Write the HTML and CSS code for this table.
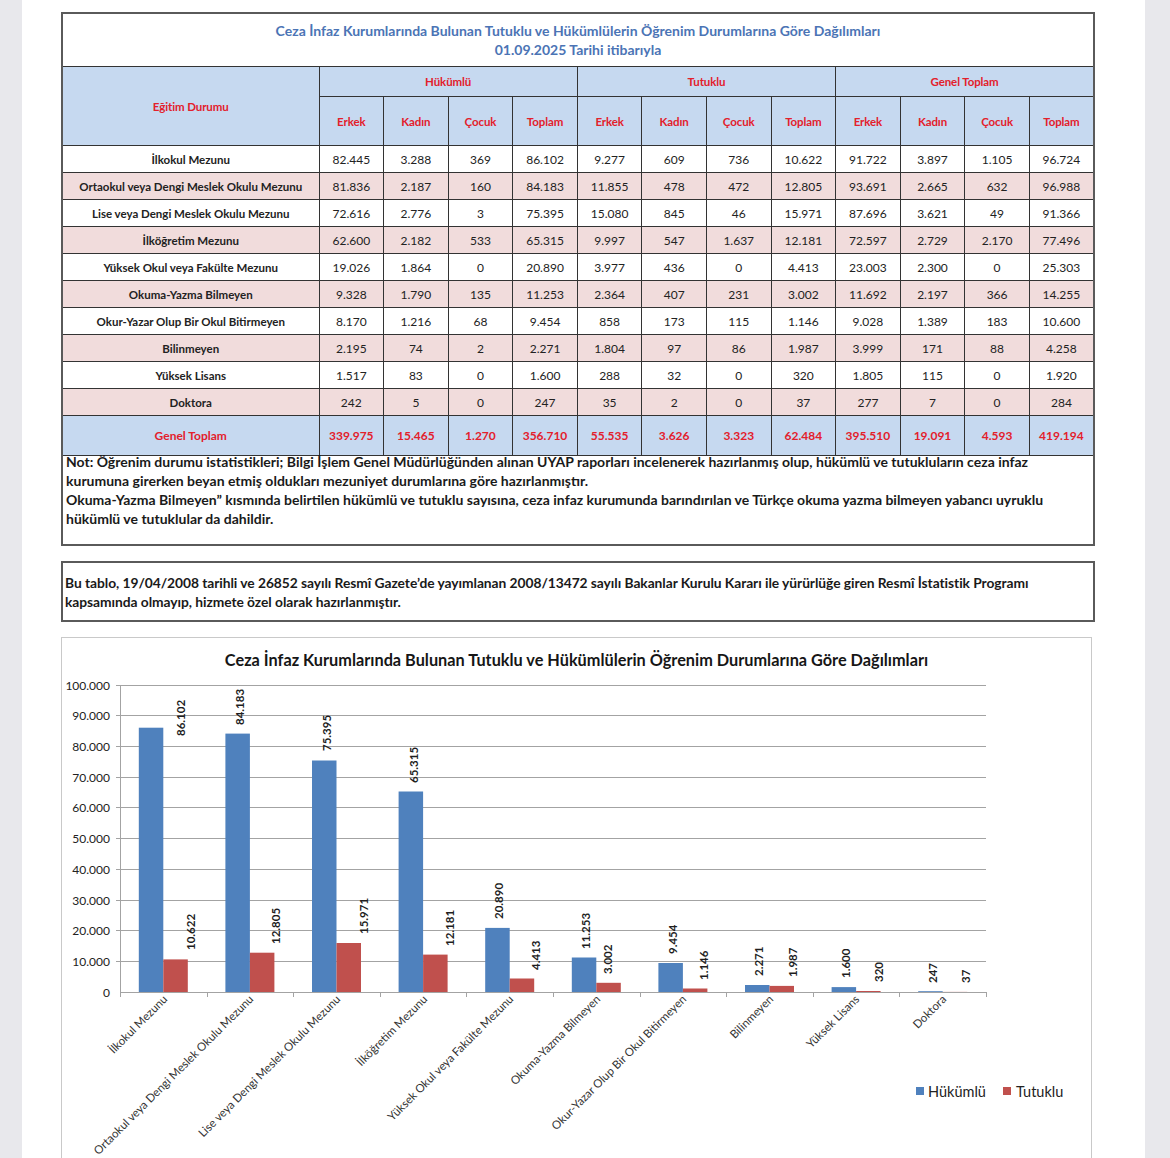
FILE: index.html
```html
<!DOCTYPE html>
<html lang="tr">
<head>
<meta charset="utf-8">
<title>Öğrenim Durumlarına Göre Dağılımları</title>
<link rel="stylesheet" href="styles.css">
</head>
<body>
<div class="page">
  <table class="stats">
    <colgroup>
      <col class="c-label">
      <col><col><col><col><col><col><col><col><col><col><col><col>
    </colgroup>
    <tr class="title-row">
      <td colspan="13">Ceza İnfaz Kurumlarında Bulunan Tutuklu ve Hükümlülerin Öğrenim Durumlarına Göre Dağılımları<br>01.09.2025 Tarihi itibarıyla</td>
    </tr>
    <tr class="head1">
      <th rowspan="2">Eğitim Durumu</th>
      <th colspan="4">Hükümlü</th>
      <th colspan="4">Tutuklu</th>
      <th colspan="4">Genel Toplam</th>
    </tr>
    <tr class="head2">
      <th>Erkek</th><th>Kadın</th><th>Çocuk</th><th>Toplam</th>
      <th>Erkek</th><th>Kadın</th><th>Çocuk</th><th>Toplam</th>
      <th>Erkek</th><th>Kadın</th><th>Çocuk</th><th>Toplam</th>
    </tr>
    <tr class="row">
      <th>İlkokul Mezunu</th><td>82.445</td><td>3.288</td><td>369</td><td>86.102</td><td>9.277</td><td>609</td><td>736</td><td>10.622</td><td>91.722</td><td>3.897</td><td>1.105</td><td>96.724</td>
    </tr>
    <tr class="row alt">
      <th>Ortaokul veya Dengi Meslek Okulu Mezunu</th><td>81.836</td><td>2.187</td><td>160</td><td>84.183</td><td>11.855</td><td>478</td><td>472</td><td>12.805</td><td>93.691</td><td>2.665</td><td>632</td><td>96.988</td>
    </tr>
    <tr class="row">
      <th>Lise veya Dengi Meslek Okulu Mezunu</th><td>72.616</td><td>2.776</td><td>3</td><td>75.395</td><td>15.080</td><td>845</td><td>46</td><td>15.971</td><td>87.696</td><td>3.621</td><td>49</td><td>91.366</td>
    </tr>
    <tr class="row alt">
      <th>İlköğretim Mezunu</th><td>62.600</td><td>2.182</td><td>533</td><td>65.315</td><td>9.997</td><td>547</td><td>1.637</td><td>12.181</td><td>72.597</td><td>2.729</td><td>2.170</td><td>77.496</td>
    </tr>
    <tr class="row">
      <th>Yüksek Okul veya Fakülte Mezunu</th><td>19.026</td><td>1.864</td><td>0</td><td>20.890</td><td>3.977</td><td>436</td><td>0</td><td>4.413</td><td>23.003</td><td>2.300</td><td>0</td><td>25.303</td>
    </tr>
    <tr class="row alt">
      <th>Okuma-Yazma Bilmeyen</th><td>9.328</td><td>1.790</td><td>135</td><td>11.253</td><td>2.364</td><td>407</td><td>231</td><td>3.002</td><td>11.692</td><td>2.197</td><td>366</td><td>14.255</td>
    </tr>
    <tr class="row">
      <th>Okur-Yazar Olup Bir Okul Bitirmeyen</th><td>8.170</td><td>1.216</td><td>68</td><td>9.454</td><td>858</td><td>173</td><td>115</td><td>1.146</td><td>9.028</td><td>1.389</td><td>183</td><td>10.600</td>
    </tr>
    <tr class="row alt">
      <th>Bilinmeyen</th><td>2.195</td><td>74</td><td>2</td><td>2.271</td><td>1.804</td><td>97</td><td>86</td><td>1.987</td><td>3.999</td><td>171</td><td>88</td><td>4.258</td>
    </tr>
    <tr class="row">
      <th>Yüksek Lisans</th><td>1.517</td><td>83</td><td>0</td><td>1.600</td><td>288</td><td>32</td><td>0</td><td>320</td><td>1.805</td><td>115</td><td>0</td><td>1.920</td>
    </tr>
    <tr class="row alt">
      <th>Doktora</th><td>242</td><td>5</td><td>0</td><td>247</td><td>35</td><td>2</td><td>0</td><td>37</td><td>277</td><td>7</td><td>0</td><td>284</td>
    </tr>
    <tr class="total">
      <th>Genel Toplam</th><td>339.975</td><td>15.465</td><td>1.270</td><td>356.710</td><td>55.535</td><td>3.626</td><td>3.323</td><td>62.484</td><td>395.510</td><td>19.091</td><td>4.593</td><td>419.194</td>
    </tr>
    <tr class="note">
      <td colspan="13">
        <div class="note-text">
          <span class="line">Not: Öğrenim durumu istatistikleri; Bilgi İşlem Genel Müdürlüğünden alınan UYAP raporları incelenerek hazırlanmış olup, hükümlü ve tutukluların ceza infaz</span>
          <span class="line">kurumuna girerken beyan etmiş oldukları mezuniyet durumlarına göre hazırlanmıştır.</span>
          <span class="line">Okuma-Yazma Bilmeyen” kısmında belirtilen hükümlü ve tutuklu sayısına, ceza infaz kurumunda barındırılan ve Türkçe okuma yazma bilmeyen yabancı uyruklu</span>
          <span class="line">hükümlü ve tutuklular da dahildir.</span>
        </div>
      </td>
    </tr>
  </table>

  <div class="disclaimer">
    <span class="line">Bu tablo, 19/04/2008 tarihli ve 26852 sayılı Resmî Gazete’de yayımlanan 2008/13472 sayılı Bakanlar Kurulu Kararı ile yürürlüğe giren Resmî İstatistik Programı</span>
    <span class="line">kapsamında olmayıp, hizmete özel olarak hazırlanmıştır.</span>
  </div>

  <div class="chart">
    <svg width="1032" height="560" viewBox="61 638 1032 560" xmlns="http://www.w3.org/2000/svg">
      <rect class="frame" x="61.5" y="638.5" width="1030" height="600"/>
      <text class="ctitle" x="576.5" y="660">Ceza İnfaz Kurumlarında Bulunan Tutuklu ve Hükümlülerin Öğrenim Durumlarına Göre Dağılımları</text>

      <g class="grid">
        <line x1="116" y1="686.5" x2="986" y2="686.5"/>
        <line x1="116" y1="716.5" x2="986" y2="716.5"/>
        <line x1="116" y1="747.5" x2="986" y2="747.5"/>
        <line x1="116" y1="778.5" x2="986" y2="778.5"/>
        <line x1="116" y1="808.5" x2="986" y2="808.5"/>
        <line x1="116" y1="839.5" x2="986" y2="839.5"/>
        <line x1="116" y1="870.5" x2="986" y2="870.5"/>
        <line x1="116" y1="901.5" x2="986" y2="901.5"/>
        <line x1="116" y1="931.5" x2="986" y2="931.5"/>
        <line x1="116" y1="962.5" x2="986" y2="962.5"/>
        <line x1="120.5" y1="686" x2="120.5" y2="993"/>
      </g>

      <g class="ylab">
        <text x="110" y="686">100.000</text>
        <text x="110" y="716">90.000</text>
        <text x="110" y="747">80.000</text>
        <text x="110" y="778">70.000</text>
        <text x="110" y="808">60.000</text>
        <text x="110" y="839">50.000</text>
        <text x="110" y="870">40.000</text>
        <text x="110" y="901">30.000</text>
        <text x="110" y="931">20.000</text>
        <text x="110" y="962">10.000</text>
        <text x="110" y="993">0</text>
      </g>

      <g class="hk">
        <rect x="138.8" y="728.7" width="24.5" height="264.3"/>
        <rect x="225.4" y="734.6" width="24.5" height="258.4"/>
        <rect x="312.0" y="761.5" width="24.5" height="231.5"/>
        <rect x="398.6" y="792.5" width="24.5" height="200.5"/>
        <rect x="485.2" y="928.9" width="24.5" height="64.1"/>
        <rect x="571.8" y="958.5" width="24.5" height="34.5"/>
        <rect x="658.4" y="964.0" width="24.5" height="29.0"/>
        <rect x="745.0" y="986.0" width="24.5" height="7.0"/>
        <rect x="831.6" y="988.1" width="24.5" height="4.9"/>
        <rect x="918.2" y="992.2" width="24.5" height="0.8"/>
      </g>
      <g class="tt">
        <rect x="163.3" y="960.4" width="24.5" height="32.6"/>
        <rect x="249.9" y="953.7" width="24.5" height="39.3"/>
        <rect x="336.5" y="944.0" width="24.5" height="49.0"/>
        <rect x="423.1" y="955.6" width="24.5" height="37.4"/>
        <rect x="509.7" y="979.5" width="24.5" height="13.5"/>
        <rect x="596.3" y="983.8" width="24.5" height="9.2"/>
        <rect x="682.9" y="989.5" width="24.5" height="3.5"/>
        <rect x="769.5" y="986.9" width="24.5" height="6.1"/>
        <rect x="856.1" y="992.0" width="24.5" height="1.0"/>
        <rect x="942.7" y="992.9" width="24.5" height="0.4"/>
      </g>

      <g class="axis">
        <line x1="120" y1="993.5" x2="987" y2="993.5"/>
        <line x1="120.5" y1="993" x2="120.5" y2="998"/>
        <line x1="207.5" y1="993" x2="207.5" y2="998"/>
        <line x1="293.5" y1="993" x2="293.5" y2="998"/>
        <line x1="380.5" y1="993" x2="380.5" y2="998"/>
        <line x1="466.5" y1="993" x2="466.5" y2="998"/>
        <line x1="553.5" y1="993" x2="553.5" y2="998"/>
        <line x1="640.5" y1="993" x2="640.5" y2="998"/>
        <line x1="726.5" y1="993" x2="726.5" y2="998"/>
        <line x1="813.5" y1="993" x2="813.5" y2="998"/>
        <line x1="899.5" y1="993" x2="899.5" y2="998"/>
        <line x1="986.5" y1="993" x2="986.5" y2="998"/>
      </g>

      <g class="dl">
        <text transform="translate(180 737) rotate(-90)">86.102</text>
        <text transform="translate(239 726) rotate(-90)">84.183</text>
        <text transform="translate(326 752) rotate(-90)">75.395</text>
        <text transform="translate(413 784) rotate(-90)">65.315</text>
        <text transform="translate(498 920) rotate(-90)">20.890</text>
        <text transform="translate(585 950) rotate(-90)">11.253</text>
        <text transform="translate(672 955) rotate(-90)">9.454</text>
        <text transform="translate(758 977) rotate(-90)">2.271</text>
        <text transform="translate(845 979) rotate(-90)">1.600</text>
        <text transform="translate(932 984) rotate(-90)">247</text>
        <text transform="translate(190 951) rotate(-90)">10.622</text>
        <text transform="translate(275 945) rotate(-90)">12.805</text>
        <text transform="translate(363 935) rotate(-90)">15.971</text>
        <text transform="translate(449 947) rotate(-90)">12.181</text>
        <text transform="translate(535 971) rotate(-90)">4.413</text>
        <text transform="translate(607 975) rotate(-90)">3.002</text>
        <text transform="translate(703 981) rotate(-90)">1.146</text>
        <text transform="translate(792 978) rotate(-90)">1.987</text>
        <text transform="translate(878 983) rotate(-90)">320</text>
        <text transform="translate(965 984) rotate(-90)">37</text>
      </g>

      <g class="xlab">
        <text transform="translate(168 1001) rotate(-45)">İlkokul Mezunu</text>
        <text transform="translate(254 1001) rotate(-45)">Ortaokul veya Dengi Meslek Okulu Mezunu</text>
        <text transform="translate(341 1001) rotate(-45)">Lise veya Dengi Meslek Okulu Mezunu</text>
        <text transform="translate(428 1001) rotate(-45)">İlköğretim Mezunu</text>
        <text transform="translate(514 1001) rotate(-45)">Yüksek Okul veya Fakülte Mezunu</text>
        <text transform="translate(601 1001) rotate(-45)">Okuma-Yazma Bilmeyen</text>
        <text transform="translate(687 1001) rotate(-45)">Okur-Yazar Olup Bir Okul Bitirmeyen</text>
        <text transform="translate(774 1001) rotate(-45)">Bilinmeyen</text>
        <text transform="translate(860 1001) rotate(-45)">Yüksek Lisans</text>
        <text transform="translate(947 1001) rotate(-45)">Doktora</text>
      </g>

      <g class="legend">
        <rect class="sw-h" x="916" y="1088" width="8" height="8"/>
        <text x="928" y="1092">Hükümlü</text>
        <rect class="sw-t" x="1003" y="1088" width="8" height="8"/>
        <text x="1016" y="1092">Tutuklu</text>
      </g>
    </svg>
  </div>
</div>
</body>
</html>
```

FILE: styles.css
```css
html, body {
  margin: 0;
  padding: 0;
  height: 1158px;
  overflow: hidden;
  background: #e8e8ec;
}

.page {
  margin-left: 22px;
  width: 1123px;
  height: 1158px;
  box-sizing: border-box;
  padding: 12px 0 0 39px;
  background: #ffffff;
  overflow: hidden;
  font-family: Lato, "Noto Sans", sans-serif;
  color: #1e1e1e;
}

/* ---------- table ---------- */
.stats {
  width: 1034px;
  border-collapse: collapse;
  table-layout: fixed;
  border: 2px solid #5a5a5a;
}

.stats col.c-label { width: 257px; }

.stats td,
.stats th {
  border: 1px solid #333;
  padding: 0;
  text-align: center;
  vertical-align: middle;
  white-space: nowrap;
  overflow: hidden;
}

.title-row td {
  height: 52px;
  color: #4b74b5;
  font-weight: bold;
  font-size: 14px;
  line-height: 19px;
  background: #fff;
}

.head1 th,
.head2 th {
  background: #c6d9f0;
  color: #e3202b;
  font-weight: bold;
  font-size: 11.5px;
  letter-spacing: -0.1px;
}

.head1 th { height: 29px; }
.head2 th { height: 48px; }

.row th,
.row td {
  height: 26px;
  font-size: 12px;
  color: #222;
}

.row th {
  font-weight: bold;
  font-size: 11.5px;
}

.row td { font-weight: normal; }

.row.alt th,
.row.alt td { background: #f1dcdc; }

.total th,
.total td {
  height: 39px;
  background: #c6d9f0;
  color: #e3202b;
  font-weight: bold;
  font-size: 12px;
}

.stats .note td {
  height: 88px;
  text-align: left;
  vertical-align: top;
  padding: 0 3px;
  font-size: 14px;
  font-weight: bold;
  line-height: 18px;
  color: #1a1a1a;
  overflow: visible;
}

.note-text .line { height: 19px; line-height: 19px; }
.note-text .line:first-child { height: 15px; line-height: 11px; }

.line {
  display: block;
  white-space: nowrap;
}

/* ---------- disclaimer ---------- */
.disclaimer {
  margin-top: 15px;
  width: 1034px;
  height: 61px;
  box-sizing: border-box;
  border: 2px solid #5a5a5a;
  padding: 10px 2px 0 2px;
  font-size: 13.8px;
  font-weight: bold;
  line-height: 19px;
  letter-spacing: -0.05px;
  color: #1a1a1a;
}

/* ---------- chart ---------- */
.chart {
  margin-top: 15px;
  width: 1032px;
  height: 560px;
}

.chart svg { display: block; }

.chart text { font-family: Lato, "Noto Sans", sans-serif; }

.frame { fill: #fff; stroke: #c9c9c9; stroke-width: 1; }

.ctitle {
  font-size: 16.3px;
  font-weight: bold;
  fill: #161616;
  text-anchor: middle;
  dominant-baseline: central;
}

.grid line { stroke: #a3a3a3; stroke-width: 1; }
.axis line { stroke: #a3a3a3; stroke-width: 1; }

.ylab text {
  font-size: 12px;
  fill: #222;
  text-anchor: end;
  dominant-baseline: central;
}

.hk rect, .sw-h { fill: #4f81bd; }
.tt rect, .sw-t { fill: #c0504d; }

.dl text {
  font-size: 11.5px;
  font-weight: bold;
  fill: #1e1e1e;
  dominant-baseline: central;
}

.xlab text {
  font-size: 11.5px;
  fill: #333;
  text-anchor: end;
}

.legend text {
  font-size: 14.5px;
  fill: #222;
  dominant-baseline: central;
}
```
